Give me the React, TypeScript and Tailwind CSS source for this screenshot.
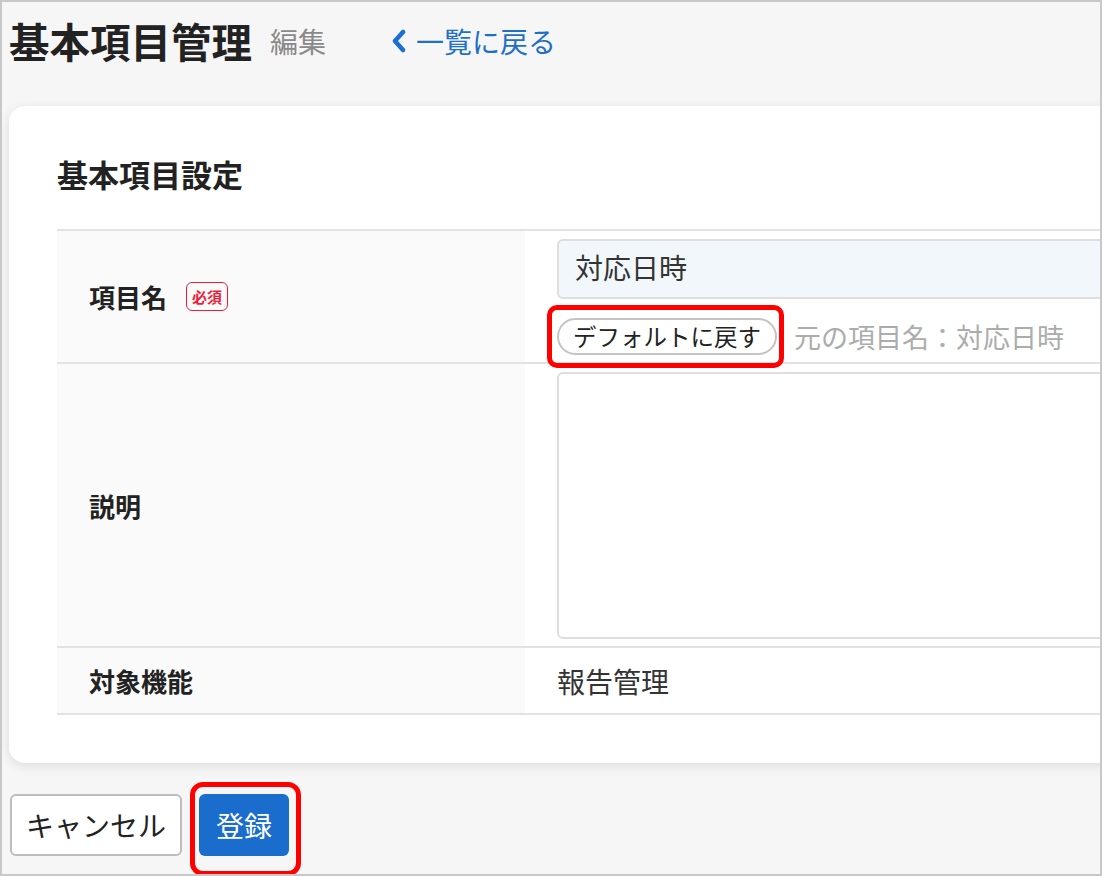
import React from "react";

const font = { fontFamily: '"Noto Sans CJK JP", "Noto Sans", sans-serif' };

function ChevronLeft() {
  return (
    <svg width="18" height="24" viewBox="0 0 18 24" className="shrink-0">
      <polyline
        points="13,3 5,12 13,21"
        fill="none"
        stroke="#1a6fd1"
        strokeWidth="4.5"
        strokeLinecap="round"
        strokeLinejoin="round"
      />
    </svg>
  );
}

function LabelCell({ children }: { children: React.ReactNode }) {
  return (
    <div className="w-[468px] shrink-0 bg-[#fafafa] pl-[32px] flex items-center gap-[19px] text-[26px] font-bold text-[#222]">
      {children}
    </div>
  );
}

export default function App() {
  return (
    <div
      style={font}
      className="relative w-[1102px] h-[876px] border-2 border-[#c8c8c8] bg-[#f6f6f6] overflow-hidden"
    >
      {/* page header */}
      <div className="flex items-center h-[77px] pl-[7px]">
        <h1 className="text-[40.5px] leading-[52px] font-bold text-[#222]">基本項目管理</h1>
        <span className="ml-[18px] text-[28px] leading-[40px] text-[#8a8a8a]">編集</span>
        <a className="ml-[64px] flex items-center gap-[8px] text-[28px] leading-[40px] text-[#1e6fc6]">
          <ChevronLeft />
          <span>一覧に戻る</span>
        </a>
      </div>

      {/* settings card */}
      <div className="ml-[7px] mt-[27px] w-[1200px] bg-white rounded-[16px] shadow-[0_3px_12px_rgba(0,0,0,0.10)] pl-[48px] pt-[48px] pb-[48px]">
        <h2 className="text-[31px] leading-[40px] font-bold text-[#222] mb-[35px]">基本項目設定</h2>

        <div className="border-t-2 border-[#e2e2e2]">
          {/* 項目名 */}
          <div className="flex border-b-2 border-[#e2e2e2]">
            <LabelCell>
              <span>項目名</span>
              <span className="border-[1.5px] border-[#ee1c3a] rounded-[6px] text-[#ee1c3a] text-[15px] leading-[27px] px-[5px] font-bold">
                必須
              </span>
            </LabelCell>
            <div className="flex-1 pl-[32px] pt-[8px] pb-[7px]">
              <div className="h-[60px] bg-[#f2f7fc] border-2 border-[#dedede] rounded-[6px] flex items-center pl-[16px] text-[28px] leading-[40px] text-[#333]">
                <span className="-mt-[4px]">対応日時</span>
              </div>
              <div className="mt-[19px] h-[37px] flex items-center gap-[17px]">
                <button className="h-[37px] px-[14px] rounded-full border-2 border-[#c4c4c4] bg-white text-[23.5px] leading-[33px] text-[#222]">
                  デフォルトに戻す
                </button>
                <span className="text-[27px] leading-[37px] text-[#acacac]">元の項目名：対応日時</span>
              </div>
            </div>
          </div>

          {/* 説明 */}
          <div className="flex border-b-2 border-[#e2e2e2]">
            <LabelCell>
              <span>説明</span>
            </LabelCell>
            <div className="flex-1 pl-[32px] pt-[8px] pb-[7px]">
              <div className="h-[267px] bg-white border-2 border-[#dedede] rounded-[6px]" />
            </div>
          </div>

          {/* 対象機能 */}
          <div className="flex h-[67px] border-b-2 border-[#e2e2e2]">
            <LabelCell>
              <span>対象機能</span>
            </LabelCell>
            <div className="flex-1 pl-[32px] flex items-center text-[28px] text-[#333]">報告管理</div>
          </div>
        </div>
      </div>

      {/* form actions */}
      <div className="flex gap-[17px] ml-[8px] mt-[31px]">
        <button className="w-[172px] h-[62px] bg-white border-2 border-[#bdbdbd] rounded-[6px] text-[28px] text-[#222]">
          キャンセル
        </button>
        <button className="w-[90px] h-[62px] bg-[#1a6dcc] rounded-[6px] text-[28px] text-white">
          登録
        </button>
      </div>

      {/* highlight marks */}
      <div className="absolute left-[545px] top-[303px] w-[237px] h-[63px] border-[5px] border-[#ff0000] rounded-[10px] pointer-events-none" />
      <div className="absolute left-[188px] top-[780px] w-[111px] h-[94px] border-[5px] border-[#ff0000] rounded-[13px] pointer-events-none" />
    </div>
  );
}
